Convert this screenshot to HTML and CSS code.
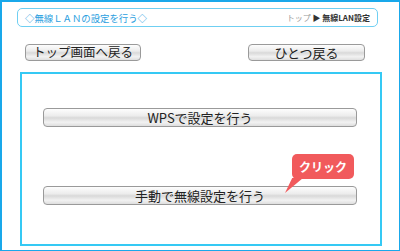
FILE: index.html
```
<!DOCTYPE html>
<html lang="ja">
<head>
    <meta charset="UTF-8">
    <title>無線LANの設定を行う</title>
    <link rel="stylesheet" href="styles.css">
</head>
<body>
    <div class="frame">
        <div class="title-bar">
            <span class="title">◇無線ＬＡＮの設定を行う◇</span>
            <span class="crumbs"><span class="crumb-top">トップ</span> ▶ <strong>無線LAN設定</strong></span>
        </div>

        <div class="nav">
            <button class="btn nav-top">トップ画面へ戻る</button>
            <button class="btn nav-back">ひとつ戻る</button>
        </div>

        <div class="panel">
            <button class="btn wide">WPSで設定を行う</button>
            <button class="btn wide">手動で無線設定を行う</button>
            <div class="callout">クリック</div>
        </div>
    </div>
</body>
</html>
```

FILE: styles.css
```
body {
    margin: 0;
    background: #fff;
    font-family: "Noto Sans CJK JP", "Liberation Sans", sans-serif;
}
.frame {
    width: 400px;
    height: 251px;
    box-sizing: border-box;
    border: 2px solid #19a8ea;
    border-right-width: 1px;
    border-bottom-width: 1px;
    padding: 6px 0 0 15px;
}
.title-bar {
    width: 361px;
    height: 19px;
    box-sizing: border-box;
    border: 1px solid #6fcff2;
    border-radius: 5px;
    padding: 0 7px 0 7px;
    display: flex;
    align-items: center;
    justify-content: space-between;
}
.title {
    color: #2a9ee0;
    font-size: 9.4px;
}
.crumbs {
    font-size: 8px;
    color: #333;
}
.crumb-top {
    color: #999;
}
.crumbs strong {
    font-weight: bold;
}
.nav {
    display: flex;
    justify-content: space-between;
    width: 340px;
    margin: 17px 0 0 8px;
}
.btn {
    font-family: inherit;
    color: #222;
    padding: 0;
    border: 1px solid #9a9a9a;
    border-radius: 4px;
    background: linear-gradient(#fdfdfd 0%, #ececec 40%, #d9d9d9 52%, #f2f2f2 78%, #dedede 100%);
    display: flex;
    align-items: center;
    justify-content: center;
    line-height: 1;
}
.nav-top {
    width: 116px;
    height: 17px;
    font-size: 12.5px;
}
.nav-back {
    width: 117px;
    height: 17px;
    font-size: 13px;
}
.panel {
    position: relative;
    width: 362px;
    height: 174px;
    box-sizing: border-box;
    margin: 11px 0 0 3px;
    border: 2px solid #35c9f4;
    padding: 34px 0 0 21px;
}
.wide {
    width: 314px;
    height: 19px;
    font-size: 13px;
}
.wide + .wide {
    margin-top: 59px;
}
.callout {
    position: absolute;
    left: 270px;
    top: 80px;
    width: 62px;
    height: 25px;
    border-radius: 5px;
    background: #f15a5c;
    color: #fff;
    font-weight: bold;
    font-size: 12px;
    display: flex;
    align-items: center;
    justify-content: center;
}
.callout::after {
    content: "";
    position: absolute;
    left: -7px;
    top: 24px;
    width: 18px;
    height: 15px;
    background: #f15a5c;
    clip-path: polygon(40% 0, 100% 0, 0 100%);
}
```
